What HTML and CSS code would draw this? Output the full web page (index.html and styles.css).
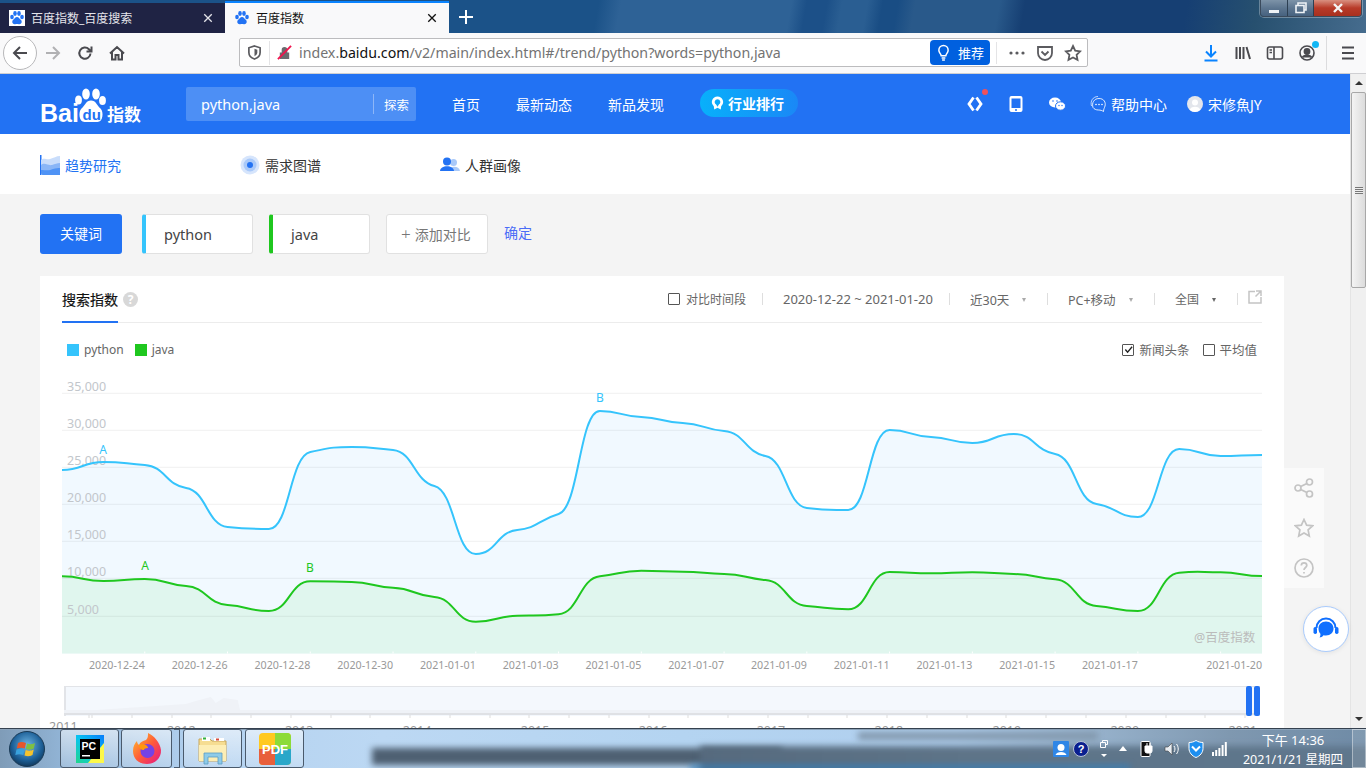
FILE: index.html
```html
<!DOCTYPE html>
<html lang="zh-CN">
<head>
    <meta charset="UTF-8">
    <title>百度指数</title>
    <link rel="stylesheet" href="styles.css">
</head>
<body>

<div class="tabbar">
    <div class="tab">
        <svg class="favicon" viewBox="0 0 16 16"><rect width="16" height="16" fill="#fff"/><g fill="#2272f3"><ellipse cx="3" cy="7" rx="1.8" ry="2.2"/><ellipse cx="6" cy="3.5" rx="1.8" ry="2.4"/><ellipse cx="10" cy="3.5" rx="1.8" ry="2.4"/><ellipse cx="13" cy="7" rx="1.8" ry="2.2"/><path d="M8 7c-2 0-2.500 2-4 3-1.500 1.500-.5 4.500 2 4.200 1-.1 1.500-.3 2-.3s1 .2 2 .3c2.500.3 3.500-2.700 2-4.200-1.500-1-2-3-4-3z"/></g></svg>
        <span class="tab-title">百度指数_百度搜索</span>
        <svg class="tab-close" viewBox="0 0 12 12"><path d="M1.500 1.500l9 9m0-9l-9 9"/></svg>
    </div>
    <div class="tab tab-active">
        <svg class="favicon" viewBox="0 0 16 16"><g fill="#2272f3"><ellipse cx="3" cy="7" rx="1.8" ry="2.2"/><ellipse cx="6" cy="3.5" rx="1.8" ry="2.4"/><ellipse cx="10" cy="3.5" rx="1.8" ry="2.4"/><ellipse cx="13" cy="7" rx="1.8" ry="2.2"/><path d="M8 7c-2 0-2.500 2-4 3-1.500 1.500-.5 4.500 2 4.200 1-.1 1.500-.3 2-.3s1 .2 2 .3c2.500.3 3.500-2.700 2-4.200-1.500-1-2-3-4-3z"/></g></svg>
        <span class="tab-title">百度指数</span>
        <svg class="tab-close" viewBox="0 0 12 12"><path d="M1.500 1.500l9 9m0-9l-9 9"/></svg>
    </div>
    <svg class="new-tab" viewBox="0 0 14 14"><path d="M7 0v14M0 7h14"/></svg>
    <div class="win-buttons">
        <div class="win-btn win-min"><span class="min-bar"></span></div>
        <div class="win-btn win-max">
            <svg viewBox="0 0 12 12"><path d="M3 3V1h8v7H9M1 3.500h8v7H1z"/></svg>
        </div>
        <div class="win-btn win-close">
            <svg viewBox="0 0 12 10"><path d="M2 1l8 8m0-8l-8 8"/></svg>
        </div>
    </div>
</div>

<div class="toolbar">
    <div class="back-btn">
        <svg class="tool-icon" viewBox="0 0 18 18"><path d="M16 9H3M9 3L3 9l6 6"/></svg>
    </div>
    <svg class="tool-icon tool-off" viewBox="0 0 18 18"><path d="M2 9h13M9 3l6 6-6 6"/></svg>
    <svg class="tool-icon tool-reload" viewBox="0 0 18 18"><path d="M14.500 9.500a5.600 5.600 0 1 1-1.600-4.300L15 7.500M15.500 2.500v5h-5"/></svg>
    <svg class="tool-icon" viewBox="0 0 18 18"><path d="M2 9.500L9 3l7 6.500M4 8v7.500h3.500V11h3v4.500H14V8"/></svg>
    <div class="urlbar">
        <svg class="url-icon" viewBox="0 0 16 16"><path d="M8 1l6 2v5c0 3.500-3 6-6 7-3-1-6-3.500-6-7V3z" fill="none" stroke="#5b5b5f" stroke-width="1.800"/><path d="M8 4l3 1v3c0 2-1.500 3.200-3 4z" fill="#5b5b5f"/></svg>
        <span class="url-sep"></span>
        <svg class="url-lock" viewBox="0 0 16 16"><path d="M3 8h10v7H3zM5 8V5a3 3 0 0 1 6 0v3" fill="#6a6a6e"/><path d="M1 15L15 1" stroke="#f0134d" stroke-width="2"/></svg>
        <span class="url-text">index.<b>baidu.com</b>/v2/main/index.html#/trend/python?words=python,java</span>
        <div class="url-rec">
            <svg viewBox="0 0 14 18"><path d="M4.500 12.500C4 10 2 9.500 2 6.500a5 5 0 0 1 10 0c0 3-2 3.500-2.500 6zM5 15h4M5.500 17h3"/></svg>
            <span>推荐</span>
        </div>
        <span class="url-sep url-sep-right"></span>
        <svg class="url-action" viewBox="0 0 18 16"><circle cx="3" cy="8" r="1.600"/><circle cx="9" cy="8" r="1.600"/><circle cx="15" cy="8" r="1.600"/></svg>
        <svg class="url-action url-line" viewBox="0 0 18 16"><path d="M2 2h14v6a7 7 0 0 1-14 0zM5.500 6.500L9 10l3.500-3.500"/></svg>
        <svg class="url-action url-line" viewBox="0 0 18 18"><path d="M9 2l2.200 4.600 5 .7-3.600 3.500.9 5L9 13.400l-4.500 2.400.9-5L1.800 7.300l5-.7z"/></svg>
    </div>
    <div class="tool-right">
        <svg class="tool-icon tool-blue" viewBox="0 0 16 18"><path d="M8 1v11M3 7.500L8 12.500l5-5M1.500 16.500h13"/></svg>
        <svg class="tool-icon" viewBox="0 0 18 18"><path d="M2.500 3v12M6 3v12M9.500 3v12M12.500 3l3.500 12"/></svg>
        <svg class="tool-icon tool-thin" viewBox="0 0 18 18"><rect x="1.500" y="3" width="15" height="12" rx="2"/><path d="M8 3v12M3.500 6H6M3.500 8.500H6"/></svg>
        <div class="account">
            <svg class="tool-icon tool-thin" viewBox="0 0 18 18"><circle cx="9" cy="9" r="7"/><circle cx="9" cy="7.500" r="2.600" fill="#4a4a4f"/><path d="M4.500 13.500c1-3 8-3 9 0" fill="#4a4a4f"/></svg>
            <span class="account-dot"></span>
        </div>
        <span class="tool-sep"></span>
        <svg class="tool-icon tool-menu" viewBox="0 0 18 18"><path d="M3 3.500h12M3 9h12M3 14.500h12"/></svg>
    </div>
</div>

<div class="viewport">
    <div class="page">
        <div class="topbar">
            <svg class="logo" viewBox="0 0 101 40">
                <text class="logo-bai" x="0" y="38">Bai</text>
                <g fill="#fff">
                    <ellipse cx="38.500" cy="16" rx="3.400" ry="4.500"/>
                    <ellipse cx="46" cy="10" rx="3.800" ry="5.500"/>
                    <ellipse cx="56" cy="10" rx="3.800" ry="5.500"/>
                    <ellipse cx="62.500" cy="16.500" rx="3.400" ry="4.500"/>
                    <path d="M51 16.500c-5 0-5.500 4.500-9.500 8-3.500 3.500-2.500 13.500 3 13.500h13c5.500 0 6.500-10 3-13.500-4-3.500-4.500-8-9.500-8z"/>
                </g>
                <text class="logo-du" x="42.500" y="36">du</text>
                <text class="logo-cn" x="67" y="37">指数</text>
            </svg>
            <div class="search">
                <span class="search-text">python,java</span>
                <span class="search-btn">探索</span>
            </div>
            <div class="nav">
                <span>首页</span>
                <span>最新动态</span>
                <span>新品发现</span>
                <div class="rank-pill">
                    <svg viewBox="0 0 14 14"><path fill-rule="evenodd" d="M7 0a6 6 0 0 1 4 10.500L10.500 14 7 12.200 3.500 14 3 10.500A6 6 0 0 1 7 0zm0 3a3 3 0 0 0-1.500 5.600L7 11l1.500-2.400A3 3 0 0 0 7 3z"/></svg>
                    <span>行业排行</span>
                </div>
            </div>
            <div class="top-right">
                <div class="top-icon">
                    <svg viewBox="0 0 18 18"><path d="M7.500 2.500L3 9l4.500 6.500M10.500 2.500L15 9l-4.500 6.500" fill="none" stroke="#fff" stroke-width="2.800"/></svg>
                    <span class="red-dot"></span>
                </div>
                <svg class="top-icon" viewBox="0 0 18 18"><rect x="2.500" y="1" width="13" height="16" rx="2" fill="#fff"/><rect x="4.500" y="3.500" width="9" height="9.500" fill="#2272f3"/><circle cx="9" cy="15" r="1" fill="#2272f3"/></svg>
                <svg class="top-icon" viewBox="0 0 18 18"><ellipse cx="7" cy="7.500" rx="6" ry="5" fill="#fff"/><ellipse cx="12.500" cy="11" rx="5" ry="4.200" fill="#fff" stroke="#2272f3"/><circle cx="5" cy="6" r=".8" fill="#2272f3"/><circle cx="9" cy="6" r=".8" fill="#2272f3"/><circle cx="11" cy="10.500" r=".7" fill="#2272f3"/><circle cx="14" cy="10.500" r=".7" fill="#2272f3"/></svg>
                <div class="help">
                    <svg viewBox="0 0 18 18"><path d="M2.500 11C1 6 4 1.500 9 1.500" fill="none" stroke="#fff" stroke-opacity=".7"/><path d="M4 12.500C2.500 8 5 3.500 10 3.500c5 0 7 4 6 7.500-.5 2-1.500 3-1.500 5.500-1.500-1-3-1.500-5-1.500-2.500 0-4.500-1-5.500-2.500z" fill="none" stroke="#fff" stroke-opacity=".85"/><circle cx="7" cy="9.500" r=".8" fill="#fff"/><circle cx="10" cy="9.500" r=".8" fill="#fff"/><circle cx="13" cy="9.500" r=".8" fill="#fff"/></svg>
                    <span>帮助中心</span>
                </div>
                <div class="user">
                    <svg viewBox="0 0 16 16"><circle cx="8" cy="8" r="8" fill="#e3e6ec"/><circle cx="8" cy="6.500" r="3" fill="#fff"/><path d="M2.800 14c.5-4.500 10-4.500 10.400 0a8 8 0 0 1-10.400 0z" fill="#fff"/></svg>
                    <span class="user-name">宋修魚JY</span>
                </div>
            </div>
        </div>

        <div class="subnav">
            <div class="subnav-item subnav-on">
                <svg viewBox="0 0 20 20"><path d="M0 0h1.500v20H0z" fill="#2272f3"/><path d="M1 18V5c3-3 5 0 9-1 4-1 6-3 10-3v19H3a2 2 0 0 1-2-2z" fill="#c9ddfb"/><path d="M1 18v-8c4-3 7 1 11 0 3-1 5-2 8-2v12H3a2 2 0 0 1-2-2z" fill="#8ab6f7"/><path d="M1 18v-3c5 0 8 1 12-1 3-1 5-1 7-1v7H3a2 2 0 0 1-2-2z" fill="#4f93f5"/></svg>
                <span>趋势研究</span>
            </div>
            <div class="subnav-item">
                <svg viewBox="0 0 20 20"><circle cx="10" cy="10" r="9.500" fill="#d6e5fc"/><circle cx="10" cy="10" r="6.500" fill="#a9c9f9"/><circle cx="10" cy="10" r="3" fill="#2272f3"/></svg>
                <span>需求图谱</span>
            </div>
            <div class="subnav-item">
                <svg viewBox="0 0 20 20"><circle cx="13.500" cy="7.500" r="3.500" fill="#a9c9f9"/><path d="M9 16c0-5 10-6 11 0z" fill="#a9c9f9"/><circle cx="7" cy="6.500" r="4" fill="#2272f3"/><path d="M0 16c0-6.500 14-6.500 14 0z" fill="#2272f3"/></svg>
                <span>人群画像</span>
            </div>
        </div>

        <div class="keywords">
            <div class="kw-btn">关键词</div>
            <div class="kw-card kw-python">python</div>
            <div class="kw-card kw-java">java</div>
            <div class="kw-add"><span class="kw-plus">+</span>添加对比</div>
            <span class="kw-ok">确定</span>
        </div>

        <div class="card">
            <div class="card-head">
                <div class="card-tab">搜索指数</div>
                <span class="help-mark">?</span>
                <div class="filters">
                    <div class="filter filter-first"><span class="check"></span>对比时间段</div>
                    <div class="filter filter-date">2020-12-22 ~ 2021-01-20</div>
                    <div class="filter filter-days">近30天<span class="caret"></span></div>
                    <div class="filter filter-device">PC+移动<span class="caret"></span></div>
                    <div class="filter filter-area">全国<span class="caret caret-dark"></span></div>
                    <svg class="export" viewBox="0 0 14 14"><path d="M7 1.500H1v11.500h12V7M8 1h5v5M13 1L7.500 6.500"/></svg>
                </div>
            </div>

            <div class="legend">
                <span class="swatch swatch-python"></span><span class="legend-name">python</span>
                <span class="swatch swatch-java"></span><span class="legend-name">java</span>
                <div class="legend-right">
                    <span class="check check-on">
                        <svg viewBox="0 0 10 10"><path d="M1.500 5l2.500 3 5-6"/></svg>
                    </span>新闻头条
                    <span class="check check-second"></span>平均值
                </div>
            </div>

            <svg id="chart" class="chart" viewBox="0 0 1200 280"></svg>

            <div class="dates">
                <span>2020-12-24</span><span>2020-12-26</span><span>2020-12-28</span><span>2020-12-30</span>
                <span>2021-01-01</span><span>2021-01-03</span><span>2021-01-05</span><span>2021-01-07</span>
                <span>2021-01-09</span><span>2021-01-11</span><span>2021-01-13</span><span>2021-01-15</span>
                <span>2021-01-17</span><span class="dates-last">2021-01-20</span>
            </div>

            <div class="slider">
                <svg class="slider-hump" viewBox="0 0 1196 25" preserveAspectRatio="none"><path d="M2 25L2 24 60 20 120 16 130 13 145 9 150 15 158 10 172 12 175 25z"/></svg>
                <div class="slider-ticks"></div>
                <span class="slider-handle slider-handle-a"></span>
                <span class="slider-handle slider-handle-b"></span>
            </div>
            <div class="years">
                <span class="year-first">2011</span><span>2012</span><span>2013</span><span>2014</span><span>2015</span><span>2016</span>
                <span>2017</span><span>2018</span><span>2019</span><span>2020</span><span>2021</span>
            </div>
        </div>
    </div>

    <div class="scrollbar">
        <div class="scroll-arrow"><span class="arrow-up"></span></div>
        <div class="scroll-thumb"><span class="grip"></span></div>
        <div class="scroll-arrow scroll-down"><span class="arrow-down"></span></div>
    </div>

    <div class="side-tools">
        <svg viewBox="0 0 20 20"><circle cx="4" cy="10" r="3"/><circle cx="15.500" cy="4" r="3"/><circle cx="15.500" cy="16" r="3"/><path d="M6.700 8.600l6.200-3.200M6.700 11.400l6.200 3.200"/></svg>
        <svg viewBox="0 0 20 20"><path d="M10 1.500l2.600 5.600 6 .7-4.500 4.100 1.200 6.100-5.300-3-5.300 3 1.200-6.100L1.400 7.800l6-.7z"/></svg>
        <svg viewBox="0 0 20 20"><circle cx="10" cy="10" r="9"/><path d="M7.300 7.500c0-3.500 5.500-3.500 5.500 0 0 2-2.800 2-2.800 4.500"/><path d="M10 14v1.500"/></svg>
    </div>
    <div class="chat-btn">
        <svg viewBox="0 0 26 24"><path d="M3.500 11a9.500 9.500 0 0 1 19 0" fill="none" stroke="#0f6fff" stroke-width="2"/><rect x="0.500" y="10" width="3.500" height="7" rx="1.700" fill="#0f6fff"/><rect x="22" y="10" width="3.500" height="7" rx="1.700" fill="#0f6fff"/><path d="M13 4.500c4.500 0 7.500 3 7.500 7s-3 7-7.500 7c-1 0-1.500 0-2.500-.3-1 1.300-2.500 2.300-4 2.300 .8-1 1-2.300.9-3.700-1.200-1.300-1.900-3.100-1.900-5.300 0-4 3-7 7.500-7z" fill="#0f6fff"/></svg>
    </div>
</div>

<div class="taskbar">
    <span class="blur-strip"></span>
    <span class="blur-strip blur-strip-right"></span>
    <span class="blur-strip blur-strip-top"></span>
    <span class="blur-strip blur-strip-low"></span>
    <svg class="orb" viewBox="0 0 36 36">
        <defs><radialGradient id="orbfill" cx="50%" cy="40%" r="60%"><stop offset="0" stop-color="#6fb7e6"/><stop offset=".7" stop-color="#1c5f97"/><stop offset="1" stop-color="#123a5e"/></radialGradient></defs>
        <circle cx="18" cy="18" r="17.500" fill="url(#orbfill)" stroke="#1a3a55"/>
        <path d="M9 12c3-1.500 5-1 8 0l-1.200 5.500c-3-1-5-1-8 0z" fill="#e6562b"/>
        <path d="M18 12.500c3 1 5 1 8-.5l-1.200 5.500c-3 1.500-5 1.500-8 .5z" fill="#7ec043"/>
        <path d="M7.500 18.500c3-1 5-1 8 0L14.300 24c-3-1-5-1-8 0z" fill="#3aa2dd"/>
        <path d="M16.700 19c3 1 5 1 8-.5L23.500 24c-3 1.500-5 1.500-8 .5z" fill="#f5c32c"/>
    </svg>
    <div class="task-btn task-pc">
        <svg viewBox="0 0 28 28">
            <defs><linearGradient id="pcfill" x1="0" y1="1" x2="1" y2="0"><stop offset="0" stop-color="#21d789"/><stop offset=".5" stop-color="#07c3f2"/><stop offset="1" stop-color="#087cfa"/></linearGradient></defs>
            <rect width="28" height="28" fill="url(#pcfill)"/><path d="M28 28H12L28 8z" fill="#fcf84a"/><rect x="4" y="4" width="20" height="20" fill="#000"/>
            <text x="5.500" y="14.500" class="pc-text">PC</text><rect x="6" y="20" width="8" height="1.500" fill="#fff"/>
        </svg>
    </div>
    <div class="task-btn task-ff">
        <svg viewBox="0 0 30 32">
            <defs><linearGradient id="fffill" x1="0" y1="0" x2="1" y2="1"><stop offset="0" stop-color="#ffc42c"/><stop offset=".5" stop-color="#ff5c39"/><stop offset="1" stop-color="#e31587"/></linearGradient></defs>
            <path d="M15 31C6 31 1 25 1 18 1 13 3 10 5 8c0 2 1 3 2 4 1-3 4-4 7-5 2-2 2-4 2-7 6 3 12 9 13 17 .5 8-6 14-14 14z" fill="url(#fffill)"/>
            <circle cx="15.500" cy="18" r="7" fill="#7542e5"/><path d="M7 12c4-2 9 0 9 3-3 0-4 1-4 2-3 0-5-2-5-5z" fill="#ff980e"/>
        </svg>
    </div>
    <span class="task-stack"></span>
    <div class="task-btn task-folder">
        <svg viewBox="0 0 32 32">
            <path d="M2 6h11l2 2h14v20H2z" fill="#f6dd92" stroke="#c9a75a"/><rect x="5" y="4" width="8" height="4" fill="#fff"/><rect x="6" y="4.500" width="3" height="2" fill="#32b040"/><rect x="17" y="5" width="10" height="3" fill="#fff"/><rect x="19" y="5.500" width="3" height="2" fill="#d84b3a"/>
            <path d="M2 12h27v16H2z" fill="#fdeeb5"/><path d="M7 20h18v11h-4v-7H11v7H7z" fill="#8ecbe8" stroke="#5a9cc4" stroke-width=".8"/>
        </svg>
    </div>
    <div class="task-btn task-pdf">
        <svg viewBox="0 0 32 32">
            <rect width="32" height="32" rx="4" fill="#ffc91f"/><path d="M16 0h12a4 4 0 0 1 4 4v12H16z" fill="#8cdb39"/><path d="M0 16h16v16H4a4 4 0 0 1-4-4z" fill="#e85f3b"/><path d="M16 16h16v12a4 4 0 0 1-4 4H16z" fill="#2aa7c9"/>
            <text x="16" y="20.500" class="pdf-text">PDF</text>
        </svg>
    </div>
    <div class="tray">
        <svg class="tray-qq" viewBox="0 0 16 16"><rect width="16" height="16" rx="1" fill="#2f86e6"/><circle cx="8" cy="6.500" r="3.500" fill="#fff"/><path d="M2.500 14c1-4 10-4 11 0z" fill="#fff"/></svg>
        <svg class="tray-help" viewBox="0 0 16 16"><circle cx="8" cy="8" r="7.500" fill="#0a1f8f" stroke="#b8c4d6"/><text x="8" y="12" class="help-q">?</text></svg>
        <div class="tray-mini">
            <svg viewBox="0 0 8 8"><path d="M2.500 2.500V.5h5v4h-2M.5 2.500h5v5h-5z" fill="none" stroke="#fff"/></svg>
            <span class="arrow-tiny"></span>
        </div>
        <span class="tray-up"></span>
        <svg class="tray-plug" viewBox="0 0 14 18"><rect x="1" y="1.500" width="9" height="15" rx="1" fill="#111" stroke="#fff"/><path d="M5 6h7v5a2 2 0 0 1-2 2H7a2 2 0 0 1-2-2zM7 3v3M10 3v3" fill="#fff" stroke="#fff"/></svg>
        <svg class="tray-vol" viewBox="0 0 16 16"><path d="M1 6h3l4-4v12l-4-4H1z" fill="#e8edf2" stroke="#444" stroke-width=".6"/><path d="M10 5c1.300 1.800 1.300 4.200 0 6M12.500 3c2.300 3 2.300 7 0 10" fill="none" stroke="#fff"/></svg>
        <svg class="tray-shield" viewBox="0 0 16 18"><path d="M8 .5c2 1.300 4.500 2 7 2v6c0 4-3 7.500-7 9-4-1.500-7-5-7-9v-6c2.500 0 5-.7 7-2z" fill="#1e8ff0" stroke="#fff"/><path d="M4 6.500l4 4 4-4" fill="none" stroke="#fff" stroke-width="2"/></svg>
        <svg class="tray-signal" viewBox="0 0 16 14"><path d="M1 10h2v4H1zM4.200 8h2v6h-2zM7.400 6h2v8h-2zM10.600 3h2v11h-2zM13.800 0h2v14h-2z" fill="#fff"/></svg>
        <div class="clock">
            <div class="clock-time">下午 14:36</div>
            <div>2021/1/21 星期四</div>
        </div>
        <span class="show-desktop"></span>
    </div>
</div>

<script src="chart.js"></script>
</body>
</html>
```

FILE: styles.css
```css
* {
    box-sizing: border-box;
}
body {
    margin: 0;
    width: 1366px;
    height: 768px;
    overflow: hidden;
    display: flex;
    flex-direction: column;
    font-family: "Noto Sans", "Noto Sans CJK SC", sans-serif;
    color: #333;
}

/* browser tabs */
.tabbar {
    height: 33px;
    display: flex;
    align-items: flex-end;
    background: linear-gradient(100deg, #1b5288 0, #1b5288 590px, #2e6296 612px, #2e6296 780px, #1c5088 795px, #1c5088 815px, #2a5e92 830px, #2a5e92 855px, #194d84 870px, #194d84 885px, #29598a 902px, #29598a 985px, #163f73 1010px, #163f73 1170px, #27506f 1240px, #4a7092 1366px);
    position: relative;
}
.tab {
    width: 225px;
    height: 30px;
    display: flex;
    align-items: center;
    padding: 0 12px 0 9px;
    background: #1f2344;
    color: #e4e4ea;
    font-size: 12px;
}
.tab-active {
    width: 224px;
    height: 32px;
    background: #f9f9fa;
    border-top: 2px solid #0a84ff;
    color: #111;
}
.favicon {
    width: 16px;
    height: 16px;
    flex: none;
}
.tab-title {
    margin-left: 6px;
    flex: 1;
}
.tab-close {
    width: 10px;
    height: 10px;
    fill: none;
    stroke: currentColor;
    stroke-width: 1.6;
}
.new-tab {
    width: 14px;
    height: 14px;
    margin: 0 0 9px 10px;
    fill: none;
    stroke: #fff;
    stroke-width: 2;
}
.win-buttons {
    position: absolute;
    top: 0;
    right: 4px;
    height: 17px;
    display: flex;
    border: 1px solid #3a4a5c;
    border-top: none;
    border-radius: 0 0 4px 4px;
    overflow: hidden;
    box-shadow: 0 0 0 1px rgba(255, 255, 255, .3);
}
.win-btn {
    display: flex;
    align-items: center;
    justify-content: center;
    background: linear-gradient(#7d93a8, #5d7690 50%, #46627f);
    border-right: 1px solid #2c3f52;
}
.win-min {
    width: 27px;
}
.win-max {
    width: 26px;
}
.win-max svg {
    width: 12px;
    height: 12px;
    fill: none;
    stroke: #eef2f6;
    stroke-width: 1.600;
}
.win-close {
    width: 47px;
    border-right: none;
    background: linear-gradient(#d99080, #b83a28 50%, #a8301f);
}
.min-bar {
    width: 10px;
    height: 3px;
    margin-top: 6px;
    background: #eef2f6;
}
.win-close svg {
    width: 12px;
    height: 10px;
    fill: none;
    stroke: #f4f4f4;
    stroke-width: 2.4;
}

/* browser toolbar */
.toolbar {
    height: 41px;
    display: flex;
    align-items: center;
    padding: 0 0 1px 3px;
    background: #f9f9fa;
    border-bottom: 1px solid #cfcfd2;
}
.tool-icon {
    width: 18px;
    height: 18px;
    flex: none;
    fill: none;
    stroke: #4a4a4f;
    stroke-width: 2;
}
.tool-thin {
    stroke-width: 1.600;
}
.back-btn {
    width: 34px;
    height: 34px;
    display: flex;
    align-items: center;
    justify-content: center;
    border: 1px solid #b8b8ba;
    border-radius: 50%;
    background: #fff;
    margin-right: 7px;
}
.tool-off {
    stroke: #b1b1b3;
    margin-right: 14px;
}
.tool-reload {
    margin-right: 14px;
}
.urlbar {
    width: 849px;
    height: 29px;
    margin-left: 113px;
    flex: none;
    display: flex;
    align-items: center;
    padding: 0 5px 0 7px;
    background: #fff;
    border: 1px solid #bcbcbe;
    border-radius: 2px;
}
.url-icon {
    width: 15px;
    height: 15px;
    flex: none;
}
.url-sep {
    width: 1px;
    height: 24px;
    background: #e4e4e6;
    margin: 0 7px;
}
.url-lock {
    width: 15px;
    height: 15px;
    flex: none;
}
.url-text {
    margin-left: 7px;
    flex: 1;
    font-size: 14.200px;
    color: #737373;
    white-space: nowrap;
}
.url-text b {
    font-weight: 400;
    color: #111;
}
.url-rec {
    width: 60px;
    height: 25px;
    display: flex;
    align-items: center;
    gap: 8px;
    padding-left: 7px;
    background: #0060df;
    border-radius: 4px;
    color: #fff;
    font-size: 13px;
}
.url-rec svg {
    width: 13px;
    height: 17px;
    fill: none;
    stroke: #fff;
    stroke-width: 1.600;
}
.url-sep-right {
    margin: 0 11px 0 6px;
    height: 22px;
}
.url-action {
    width: 18px;
    height: 16px;
    margin-right: 10px;
    fill: #5b5b5f;
    flex: none;
}
.url-line {
    height: 18px;
    fill: none;
    stroke: #5b5b5f;
    stroke-width: 1.800;
}
.url-action:last-child {
    margin-right: 0;
}
.tool-right {
    flex: 1;
    display: flex;
    align-items: center;
    padding-left: 114px;
    gap: 14px;
}
.tool-blue {
    stroke: #0a84ff;
}
.account {
    position: relative;
    display: flex;
}
.account-dot {
    position: absolute;
    top: -3px;
    right: -3px;
    width: 7px;
    height: 7px;
    border-radius: 50%;
    background: #12b7f5;
}
.tool-sep {
    width: 1px;
    height: 34px;
    background: #dcdcde;
    margin-left: -4px;
}
.tool-menu {
    margin-left: -2px;
}

/* page area */
.viewport {
    flex: 1;
    min-height: 0;
    display: flex;
    position: relative;
    background: #f4f4f4;
    overflow: hidden;
}
.page {
    width: 1350px;
    flex: none;
}
.topbar {
    height: 60px;
    display: flex;
    align-items: center;
    padding: 0 86px 0 40px;
    background: #2272f3;
    color: #fff;
    font-size: 14px;
}
.logo {
    width: 101px;
    height: 40px;
    flex: none;
    overflow: visible;
}
.logo-bai {
    font: bold 25px "Liberation Sans", sans-serif;
    fill: #fff;
}
.logo-du {
    font: bold 15px "Liberation Sans", sans-serif;
    fill: #2272f3;
}
.logo-cn {
    font: bold 17px "Noto Sans CJK SC", sans-serif;
    fill: #fff;
}
.search {
    width: 230px;
    height: 34px;
    margin-left: 45px;
    flex: none;
    display: flex;
    align-items: center;
    padding: 0 7px 0 15px;
    background: #4d8ff5;
    border-radius: 2px;
}
.search-text {
    flex: 1;
    font-size: 14.500px;
}
.search-btn {
    padding-left: 10px;
    border-left: 1px solid #8db6f8;
    font-size: 12.500px;
    line-height: 23px;
    height: 20px;
}
.nav {
    display: flex;
    align-items: center;
    gap: 36px;
    margin-left: 36px;
}
.rank-pill {
    width: 98px;
    height: 28px;
    display: flex;
    align-items: center;
    gap: 4px;
    padding-left: 11px;
    border-radius: 14px;
    background: linear-gradient(90deg, #08b0fb, #1a88f6);
    font-weight: 700;
    margin-top: -2px;
}
.rank-pill svg {
    width: 13px;
    height: 14px;
    fill: #fff;
}
.top-right {
    margin-left: auto;
    display: flex;
    align-items: center;
}
.top-icon {
    width: 18px;
    height: 18px;
    margin-right: 23px;
    position: relative;
    display: block;
}
.red-dot {
    position: absolute;
    top: -6px;
    right: -4px;
    width: 6px;
    height: 6px;
    border-radius: 50%;
    background: #f0515a;
}
.help,
.user {
    display: flex;
    align-items: center;
    gap: 4px;
}
.help svg {
    width: 18px;
    height: 18px;
}
.user {
    margin-left: 20px;
    gap: 5px;
}
.user svg {
    width: 16px;
    height: 16px;
}
.user-name {
    width: 56px;
    white-space: nowrap;
}

/* sub navigation */
.subnav {
    height: 60px;
    display: flex;
    align-items: center;
    padding: 2px 0 0 40px;
    background: #fff;
    font-size: 14px;
}
.subnav-item {
    width: 200px;
    display: flex;
    align-items: center;
    gap: 5px;
}
.subnav-item svg {
    width: 20px;
    height: 20px;
    flex: none;
}
.subnav-on {
    color: #2272f3;
}

/* keyword row */
.keywords {
    display: flex;
    align-items: center;
    gap: 16px;
    padding: 20px 40px 22px;
    font-size: 14px;
}
.kw-btn {
    width: 82px;
    height: 40px;
    line-height: 40px;
    margin-right: 4px;
    text-align: center;
    color: #fff;
    background: #2272f3;
    border-radius: 3px;
}
.kw-card {
    height: 40px;
    line-height: 38px;
    padding-left: 18px;
    background: #fff;
    border: 1px solid #e1e1e1;
    border-left: 4px solid;
    border-radius: 3px;
    font-size: 14.500px;
    color: #444;
}
.kw-python {
    width: 111px;
    border-left-color: #35c4fc;
}
.kw-java {
    width: 101px;
    border-left-color: #1fc71f;
}
.kw-add {
    width: 102px;
    height: 40px;
    line-height: 38px;
    padding-left: 14px;
    background: #fff;
    border: 1px solid #e1e1e1;
    border-radius: 3px;
    color: #777;
}
.kw-plus {
    font-size: 17px;
    font-weight: 300;
    margin-right: 4px;
}
.kw-ok {
    color: #4a6cf7;
    font-size: 14px;
    margin-top: -4px;
}

/* main card */
.card {
    width: 1244px;
    margin-left: 40px;
    padding: 0 22px;
    background: #fff;
}
.card-head {
    height: 47px;
    display: flex;
    align-items: center;
    border-bottom: 1px solid #ececec;
}
.card-tab {
    height: 47px;
    line-height: 48px;
    width: 56px;
    border-bottom: 2px solid #2272f3;
    font-size: 14px;
    color: #111;
    -webkit-text-stroke: .2px #111;
}
.help-mark {
    width: 15px;
    height: 15px;
    margin-left: 5px;
    line-height: 15px;
    text-align: center;
    border-radius: 50%;
    background: #d8d8d8;
    color: #fff;
    font-size: 12px;
    font-weight: 700;
}
.filters {
    margin-left: auto;
    display: flex;
    align-items: center;
    font-size: 12px;
    color: #666;
}
.filter {
    display: flex;
    align-items: center;
    height: 12px;
    padding: 0 17px 0 20px;
    border-right: 1px solid #dedede;
    white-space: nowrap;
    flex: none;
}
.filter-first {
    padding-left: 0;
    width: 95px;
}
.filter-date {
    width: 187px;
    font-size: 13px;
}
.filter-days {
    width: 98px;
    font-size: 12.500px;
}
.filter-device {
    width: 107px;
    font-size: 12.500px;
}
.filter-area {
    width: 83px;
}
.check {
    width: 12px;
    height: 12px;
    margin-right: 6px;
    flex: none;
    border: 1px solid #555;
    border-radius: 1px;
    display: inline-block;
}
.caret {
    width: 0;
    height: 0;
    margin-left: 13px;
    margin-top: 2px;
    border: 2.500px solid transparent;
    border-top: 4px solid #aaa;
    border-bottom: none;
}
.caret-dark {
    border-top-color: #666;
}
.export {
    width: 14px;
    height: 14px;
    margin: -4px 0 0 10px;
    fill: none;
    stroke: #c4c4c4;
    stroke-width: 1.500;
}

/* legend */
.legend {
    height: 53px;
    display: flex;
    align-items: center;
    padding: 0 5px;
    font-size: 12px;
    color: #666;
}
.swatch {
    width: 12px;
    height: 12px;
    margin-right: 5px;
}
.swatch-python {
    background: #35c4fc;
}
.swatch-java {
    background: #1fc71f;
}
.legend-name {
    margin-right: 11px;
}
.legend-right {
    margin-left: auto;
    display: flex;
    align-items: center;
    font-size: 12.500px;
}
.check-on {
    margin-right: 5px;
    display: flex;
    align-items: center;
    justify-content: center;
}
.check-on svg {
    width: 9px;
    height: 9px;
    fill: none;
    stroke: #222;
    stroke-width: 1.500;
}
.check-second {
    margin: 0 4px 0 14px;
}

/* chart */
.chart {
    display: block;
    width: 1200px;
    height: 280px;
}
.grid-line {
    stroke: #000;
    stroke-opacity: .06;
}
.y-label {
    font-size: 12.500px;
    fill: #c2c6cb;
}
.mark-label {
    font-size: 12px;
    text-anchor: middle;
}
.watermark {
    font-size: 12.500px;
    fill: #bbb;
}
.dates {
    height: 30px;
    display: flex;
    font-size: 10.700px;
    color: #999;
    line-height: 18px;
}
.dates span {
    width: 82.760px;
    text-align: right;
    flex: none;
}
.dates .dates-last {
    flex: 1;
}

/* time slider */
.slider {
    width: 1196px;
    height: 30px;
    margin-left: 2px;
    position: relative;
    background: #f4f8fd;
    border: 2px solid #e2e4e8;
    border-width: 1px 0 0 2px;
}
.slider-hump {
    position: absolute;
    left: 0;
    right: 0;
    bottom: 3px;
    width: 100%;
    height: 25px;
    fill: #eff2f7;
}
.slider-ticks {
    position: absolute;
    left: -2px;
    right: 0;
    bottom: -2px;
    height: 8px;
    background: linear-gradient(#eff2f7 0 3px, #dfe1e5 3px 5px, transparent 5px), repeating-linear-gradient(90deg, #dcdcdc 0 1px, transparent 1px 39.760px);
    background-position: 0 0, 27.500px 0;
}
.slider-handle {
    position: absolute;
    top: -1px;
    width: 6px;
    height: 30px;
    background: #2272f3;
    border-radius: 2px;
}
.slider-handle-a {
    right: 8px;
}
.slider-handle-b {
    right: 0;
}
.years {
    display: flex;
    justify-content: space-between;
    align-items: flex-start;
    margin: 6px 5px 0 -13px;
    font-size: 12.500px;
    color: #999;
}
.year-first {
    margin-top: -4px;
}

/* page scrollbar */
.scrollbar {
    width: 16px;
    flex: none;
    display: flex;
    flex-direction: column;
    background: #f0f0f0;
    border-left: 1px solid #e4e4e4;
}
.scroll-arrow {
    height: 18px;
    display: flex;
    align-items: center;
    justify-content: center;
}
.scroll-down {
    margin-top: auto;
}
.arrow-up,
.arrow-down,
.tray-up,
.arrow-tiny {
    width: 0;
    height: 0;
    border: 4px solid transparent;
    border-top: none;
    border-bottom: 4px solid #333;
}
.arrow-down {
    border-top: 4px solid #333;
    border-bottom: none;
}
.scroll-thumb {
    height: 196px;
    display: flex;
    align-items: center;
    justify-content: center;
    background: linear-gradient(90deg, #f4f4f4, #dcdcdc);
    border: 1px solid #a8a8a8;
    border-radius: 2px;
}
.grip {
    width: 8px;
    height: 7px;
    background: repeating-linear-gradient(#777 0 1px, #eee 1px 2px);
}

/* floating tools */
.side-tools {
    position: absolute;
    top: 394px;
    left: 1284px;
    width: 40px;
    height: 120px;
    display: flex;
    flex-direction: column;
    align-items: center;
    justify-content: space-around;
    background: #fafafa;
}
.side-tools svg {
    width: 20px;
    height: 20px;
    fill: none;
    stroke: #c4c4c4;
    stroke-width: 1.700;
}
.chat-btn {
    position: absolute;
    top: 532px;
    left: 1303px;
    width: 46px;
    height: 46px;
    display: flex;
    align-items: center;
    justify-content: center;
    background: #fff;
    border: 1px solid #a9cbfd;
    border-radius: 50%;
    box-shadow: 0 1px 5px rgba(0, 0, 0, .08);
}
.chat-btn svg {
    width: 26px;
    height: 24px;
}

/* windows taskbar */
.taskbar {
    height: 40px;
    flex: none;
    position: relative;
    display: flex;
    align-items: center;
    padding-left: 9px;
    border-top: 1px solid #35414f;
    box-shadow: inset 0 1px 0 #8ba2b8;
    background: linear-gradient(90deg, #7f9cb8 0, #93b6d8 5%, #b4d2f0 15%, #bcd8f3 28%, #b4d4f1 50%, #b0cfee 70%, #97b2cc 80%, #7f98b0 90%, #6f8ba6 100%);
    overflow: hidden;
}
.blur-strip {
    position: absolute;
    left: 372px;
    top: 19px;
    width: 410px;
    height: 17px;
    background: #4e6072;
    filter: blur(3px);
}
.blur-strip-right {
    left: 700px;
    top: 17px;
    width: 680px;
    height: 30px;
    background: linear-gradient(90deg, #566a7e, #5e7488 40%, #5f778d);
}
.blur-strip-top {
    left: 858px;
    top: 3px;
    width: 240px;
    height: 8px;
    background: #8298ad;
}
.blur-strip-low {
    left: 690px;
    top: 36px;
    width: 440px;
    height: 5px;
    background: #3a7fb5;
}
.orb {
    width: 36px;
    height: 36px;
    position: relative;
    flex: none;
}
.task-btn {
    height: 39px;
    flex: none;
    position: relative;
    display: flex;
    align-items: center;
    justify-content: center;
    border: 1px solid #4a5a6c;
    border-radius: 3px;
    background: linear-gradient(rgba(255, 255, 255, .55), rgba(255, 255, 255, .15));
}
.task-btn svg {
    width: 32px;
    height: 32px;
}
.task-pc {
    width: 59px;
    margin-left: 15px;
}
.task-pc svg {
    width: 28px;
    height: 28px;
}
.task-ff {
    width: 51px;
    margin-left: 2px;
}
.task-ff svg {
    width: 30px;
}
.task-stack {
    width: 6px;
    height: 39px;
    margin-left: 2px;
    border: 1px solid #4a5a6c;
    border-left: none;
    position: relative;
}
.task-folder {
    width: 59px;
    margin-left: 3px;
}
.task-pdf {
    width: 59px;
    margin-left: 3px;
}
.pc-text {
    font: bold 10.500px "Liberation Sans", sans-serif;
    fill: #fff;
}
.pdf-text {
    font: bold 13px "Liberation Sans", sans-serif;
    fill: #fff;
    text-anchor: middle;
}
.tray {
    margin-left: auto;
    display: flex;
    align-items: center;
    position: relative;
    color: #fff;
}
.tray-qq {
    width: 16px;
    height: 16px;
}
.tray-help {
    width: 16px;
    height: 16px;
    margin-left: 4px;
}
.help-q {
    font: bold 11px "Liberation Sans", sans-serif;
    fill: #fff;
    text-anchor: middle;
}
.tray-mini {
    width: 8px;
    margin-left: 11px;
    display: flex;
    flex-direction: column;
    align-items: center;
    gap: 6px;
}
.tray-mini svg {
    width: 8px;
    height: 8px;
}
.arrow-tiny {
    border-width: 3px;
    border-bottom: none;
    border-top: 3px solid #fff;
}
.tray-up {
    margin-left: 11px;
    border-bottom-color: #fff;
    border-bottom-width: 5px;
}
.tray-plug {
    width: 14px;
    height: 18px;
    margin-left: 13px;
}
.tray-vol {
    width: 16px;
    height: 16px;
    margin-left: 10px;
}
.tray-shield {
    width: 16px;
    height: 18px;
    margin-left: 8px;
}
.tray-signal {
    width: 16px;
    height: 14px;
    margin-left: 7px;
}
.clock {
    width: 116px;
    margin: 2px 0 0 8px;
    text-align: center;
    font-size: 12.500px;
    line-height: 19px;
}
.clock-time {
    font-size: 13px;
}
.show-desktop {
    width: 14px;
    height: 39px;
    margin-left: 1px;
    border: 1px solid rgba(255, 255, 255, .4);
    background: rgba(255, 255, 255, .12);
}
```

FILE: chart.js
```js
const blue = [470, 462, 465, 488, 527, 529, 452, 447, 450, 486, 554, 530, 514, 411, 417, 423, 431, 456, 508, 510, 430, 437, 443, 434, 454, 504, 517, 449, 456, 455];
const green = [576.3, 581, 579, 586, 605, 611, 581.3, 582, 587.7, 597, 621.7, 615.7, 614.3, 576.3, 570.7, 571.7, 574, 580, 606, 609.3, 572, 573.3, 572.3, 574, 579.3, 606, 611, 572.7, 572.3, 576];
const top_y = 376;
const bottom = 277.5;
const step = 1200 / 29;
const svg = document.getElementById('chart');

// flat tangent on peaks and valleys so the curve does not overshoot
function slope(points, i) {
    if (i === 0 || i === points.length - 1) return 0;
    const a = points[i] - points[i - 1];
    const b = points[i + 1] - points[i];
    if (a * b <= 0) return 0;
    return (a + b) * 0.05;
}

function linePath(points) {
    let d = `M0 ${points[0] - top_y}`;
    for (let i = 0; i < points.length - 1; i++) {
        const x = i * step;
        const c1 = points[i] + slope(points, i) - top_y;
        const c2 = points[i + 1] - slope(points, i + 1) - top_y;
        d += ` C${(x + step * 0.5).toFixed(1)} ${c1.toFixed(1)} ${(x + step * 0.5).toFixed(1)} ${c2.toFixed(1)} ${(x + step).toFixed(1)} ${(points[i + 1] - top_y).toFixed(1)}`;
    }
    return d;
}

function add(tag, attrs, text) {
    const el = document.createElementNS('http://www.w3.org/2000/svg', tag);
    Object.keys(attrs).forEach(key => el.setAttribute(key, attrs[key]));
    if (text) el.textContent = text;
    svg.appendChild(el);
}

function area(points, fill, stroke) {
    const d = linePath(points);
    add('path', { d: `${d} L1200 ${bottom} L0 ${bottom} Z`, fill: fill });
    return () => add('path', { d: d, fill: 'none', stroke: stroke, 'stroke-width': 2 });
}

const drawBlue = area(blue, '#f1f9ff', '#35c4fc');
const drawGreen = area(green, '#e0f6ee', '#1fc71f');

// grid lines and y axis labels
[393.3, 430.3, 467.3, 504.3, 541.3, 578.3, 616.3].forEach((y, i) => {
    add('line', { x1: 0, x2: 1200, y1: y - top_y, y2: y - top_y, class: 'grid-line' });
    const label = ['35,000', '30,000', '25,000', '20,000', '15,000', '10,000', '5,000'][i];
    add('text', { x: 5, y: y - top_y - 2.5, class: 'y-label' }, label);
});

drawBlue();
drawGreen();

add('text', { x: 41, y: 78, class: 'mark-label', fill: '#35c4fc' }, 'A');
add('text', { x: 538, y: 26, class: 'mark-label', fill: '#35c4fc' }, 'B');
add('text', { x: 83, y: 194, class: 'mark-label', fill: '#1fc71f' }, 'A');
add('text', { x: 248, y: 196, class: 'mark-label', fill: '#1fc71f' }, 'B');
add('text', { x: 1132, y: 266, class: 'watermark' }, '@百度指数');

// white notches on the x axis, one every two days
for (let i = 2; i < 29; i += 2) {
    add('line', { x1: i * step, x2: i * step, y1: bottom - 2, y2: bottom, stroke: '#fff' });
}
```
